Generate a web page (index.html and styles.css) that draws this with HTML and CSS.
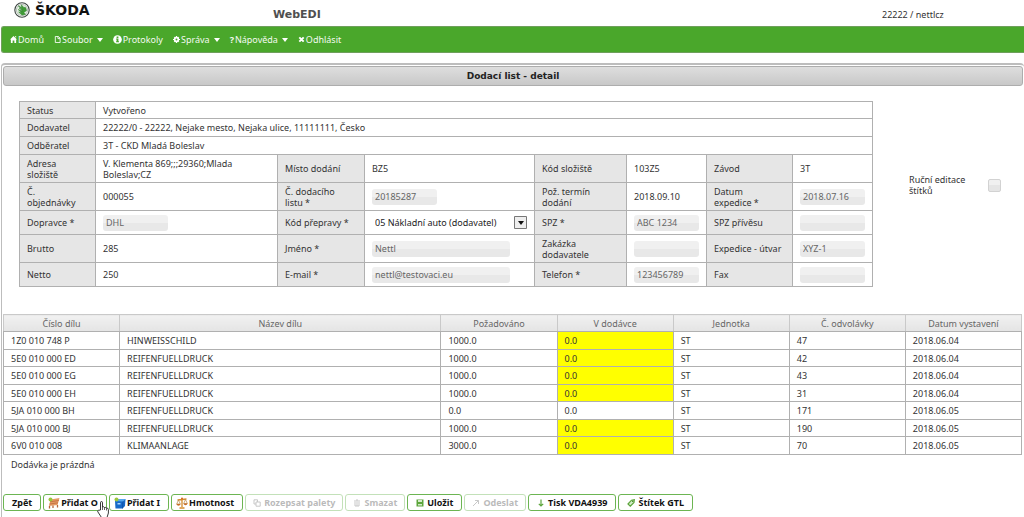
FILE: index.html
```html
<!DOCTYPE html>
<html lang="cs">
<head>
<meta charset="utf-8">
<title>WebEDI - Dodací list</title>
<link rel="stylesheet" href="styles.css">
</head>
<body>
<header class="top">
  <div class="brand">
    <svg class="brand-mark" viewBox="0 0 16 16" aria-hidden="true">
      <circle cx="8" cy="8" r="7.2" fill="#fff" stroke="#3b4440" stroke-width="1.1"/>
      <circle cx="8" cy="8" r="5.6" fill="#e3f1e0" stroke="#8d9a90" stroke-width=".6"/>
      <path d="M4.2 3.8 9 8.2 5 5.8 8.6 9 4.2 7.6 7.6 10.4 4.6 10 8 13 11.6 12.4 9.8 10.6 12.6 8.6 11.6 5.6 9.4 5.2 7.4 2.8 7.6 5.4z" fill="#3f9c35" stroke="#2c7b2e" stroke-width=".5"/>
    </svg>
    <span class="brand-name">ŠKODA</span>
  </div>
  <h1 class="app-name">WebEDI</h1>
  <span class="user">22222 / nettlcz</span>
</header>

<nav class="menu">
  <a class="menu-item" href="#"><svg class="ico" viewBox="0 0 8 8" aria-hidden="true"><path d="M4 0 8 4H7v4H5V5H3v3H1V4H0zM6 0h1v2L6 1z" fill="#fff"/></svg>Domů</a>
  <a class="menu-item" href="#"><svg class="ico" viewBox="0 0 8 8" aria-hidden="true"><path d="M1.5.5H5L7 2.5V7.5H1.5zM4.5.5V3H7" fill="none" stroke="#fff"/></svg>Soubor<span class="caret"></span></a>
  <a class="menu-item" href="#"><svg class="ico-info" viewBox="0 0 10 10" aria-hidden="true"><circle cx="5" cy="5" r="4.8" fill="#fff"/><path d="M4 1.7h2v1.5H4zM3.5 4H6v3h.7v1H3.4V7H4V5h-.5z" fill="#4aa72b"/></svg>Protokoly</a>
  <a class="menu-item" href="#"><svg class="ico" viewBox="0 0 8 8" aria-hidden="true"><path d="M3.3 0h1.4v1L6 .9l1.1 1.2L6.8 3.3H8v1.4H6.8L7.1 6 6 7.1l-1.3-.3V8H3.3V6.8L2 7.1.9 6l.3-1.3H0V3.3h1.2L.9 2 2 .9l1.3.3z" fill="#fff"/><circle cx="4" cy="4" r="1.1" fill="#4aa72b"/></svg>Správa<span class="caret"></span></a>
  <a class="menu-item" href="#"><b>?</b>Nápověda<span class="caret"></span></a>
  <a class="menu-item" href="#"><svg class="ico" viewBox="0 0 8 8" aria-hidden="true"><path d="M1.5 1.5l5 5M6.5 1.5l-5 5" stroke="#fff" stroke-width="2.2"/></svg>Odhlásit</a>
</nav>

<main class="panel">
  <h2 class="panel-title">Dodací list - detail</h2>

  <div class="detail">
    <table class="form">
      <colgroup><col class="f1"><col class="f2"><col class="f3"><col class="f4"><col class="f5"><col class="f6"><col class="f7"><col class="f8"></colgroup>
      <tr class="single"><th>Status</th><td colspan="7">Vytvořeno</td></tr>
      <tr class="single tall"><th>Dodavatel</th><td colspan="7">22222/0 - 22222, Nejake mesto, Nejaka ulice, 11111111, Česko</td></tr>
      <tr class="single tall"><th>Odběratel</th><td colspan="7">3T - CKD Mladá Boleslav</td></tr>
      <tr class="double">
        <th>Adresa<br>složiště</th><td>V. Klementa 869;;;29360;Mlada<br>Boleslav;CZ</td>
        <th>Místo dodání</th><td>BZ5</td>
        <th>Kód složiště</th><td>103Z5</td>
        <th>Závod</th><td>3T</td>
      </tr>
      <tr class="double">
        <th>Č.<br>objednávky</th><td>000055</td>
        <th><label for="note">Č. dodacího<br>listu *</label></th><td><input class="field" id="note" value="20185287" disabled></td>
        <th>Pož. termín<br>dodání</th><td>2018.09.10</td>
        <th><label for="date">Datum<br>expedice *</label></th><td><input class="field" id="date" value="2018.07.16" disabled></td>
      </tr>
      <tr class="control">
        <th><label for="carrier">Dopravce *</label></th><td><input class="field" id="carrier" value="DHL" disabled></td>
        <th><label for="mode">Kód přepravy *</label></th>
        <td><div class="picker"><select id="mode"><option>05 Nákladní auto (dodavatel)</option></select><svg viewBox="0 0 13 13" aria-hidden="true"><path d="M.5.5h12v12H.5z" fill="#eee" stroke="#777"/><path d="M4 5h6L7 9z" fill="#111"/></svg></div></td>
        <th><label for="spz">SPZ *</label></th><td><input class="field" id="spz" value="ABC 1234" disabled></td>
        <th><label for="trailer">SPZ přívěsu</label></th><td><input class="field" id="trailer" disabled></td>
      </tr>
      <tr class="double">
        <th>Brutto</th><td>285</td>
        <th><label for="name">Jméno *</label></th><td><input class="field wide" id="name" value="Nettl" disabled></td>
        <th><label for="order">Zakázka<br>dodavatele</label></th><td><input class="field" id="order" disabled></td>
        <th><label for="dept">Expedice - útvar</label></th><td><input class="field" id="dept" value="XYZ-1" disabled></td>
      </tr>
      <tr class="control">
        <th>Netto</th><td>250</td>
        <th><label for="mail">E-mail *</label></th><td><input class="field wide" id="mail" value="nettl@testovaci.eu" disabled></td>
        <th><label for="phone">Telefon *</label></th><td><input class="field" id="phone" value="123456789" disabled></td>
        <th><label for="fax">Fax</label></th><td><input class="field" id="fax" disabled></td>
      </tr>
    </table>
    <div class="manual">
      <label for="manual">Ruční editace<br>štítků</label>
      <input type="checkbox" id="manual" disabled>
    </div>
  </div>

  <table class="parts">
    <colgroup><col class="p1"><col class="p2"><col class="p1"><col class="p1"><col class="p1"><col class="p1"><col class="p1"></colgroup>
    <thead><tr><th>Číslo dílu</th><th>Název dílu</th><th>Požadováno</th><th>V dodávce</th><th>Jednotka</th><th>Č. odvolávky</th><th>Datum vystavení</th></tr></thead>
    <tbody>
      <tr><td>1Z0 010 748 P</td><td>HINWEISSCHILD</td><td>1000.0</td><td class="open">0.0</td><td>ST</td><td>47</td><td>2018.06.04</td></tr>
      <tr><td>5E0 010 000 ED</td><td>REIFENFUELLDRUCK</td><td>1000.0</td><td class="open">0.0</td><td>ST</td><td>42</td><td>2018.06.04</td></tr>
      <tr><td>5E0 010 000 EG</td><td>REIFENFUELLDRUCK</td><td>1000.0</td><td class="open">0.0</td><td>ST</td><td>43</td><td>2018.06.04</td></tr>
      <tr><td>5E0 010 000 EH</td><td>REIFENFUELLDRUCK</td><td>1000.0</td><td class="open">0.0</td><td>ST</td><td>31</td><td>2018.06.04</td></tr>
      <tr><td>5JA 010 000 BH</td><td>REIFENFUELLDRUCK</td><td>0.0</td><td>0.0</td><td>ST</td><td>171</td><td>2018.06.05</td></tr>
      <tr><td>5JA 010 000 BJ</td><td>REIFENFUELLDRUCK</td><td>1000.0</td><td class="open">0.0</td><td>ST</td><td>190</td><td>2018.06.05</td></tr>
      <tr><td>6V0 010 008</td><td>KLIMAANLAGE</td><td>3000.0</td><td class="open">0.0</td><td>ST</td><td>70</td><td>2018.06.05</td></tr>
    </tbody>
  </table>
  <p class="empty">Dodávka je prázdná</p>

  <div class="actions">
    <button class="btn">Zpět</button>
    <button class="btn"><svg class="pic" viewBox="0 0 12 12" aria-hidden="true"><path d="M2.500 2.500 11.500 1 9.500 8 1 9z" fill="#e59a63"/><path d="M2 4.800 11 3.500M1.500 7 10 5.800" stroke="#b8623a" stroke-width=".7"/><path d="M1.500 9v2.500M5 8.500v2.500M9.500 8v2.500" stroke="#b5653a" stroke-width="1.300"/><circle cx="2.500" cy="2.500" r="2" fill="#9bc53d"/></svg>Přidat O<svg class="cursor" viewBox="0 0 12 17" aria-hidden="true"><path d="M3.500 9V1.800q0-1.300 1-1.300t1 1.300V6q1.500-.8 2 .5 1.400-.6 1.900.6 2-.3 2 1.400v3.500L10 16.500H4.500L.8 10.800Q.3 9.500 1.500 9.300z" fill="#fff" stroke="#222" stroke-width=".9"/><path d="M5.500 6v3M7.500 6.500V9M9.500 7.200V9.500" stroke="#222" stroke-width=".7"/></svg></button>
    <button class="btn"><svg class="pic" viewBox="0 0 12 12" aria-hidden="true"><path d="M1 4 4 2h7.500L11 9 8.500 11.500H1.500z" fill="#1769c9"/><path d="M1 4 4 2h7.500L9 4.500z" fill="#55a7ee"/><path d="M9 4.500 8.500 11.500" stroke="#0b4593" stroke-width=".7"/><path d="M3.500 6h3v1.500h-3z" fill="#a8d6ff"/><circle cx="2.500" cy="2.500" r="2" fill="#9bc53d"/></svg>Přidat I</button>
    <button class="btn"><svg class="pic" viewBox="0 0 12 12" aria-hidden="true"><path d="M6 1v9M3.500 11h5M1.500 3 10.500 2" fill="none" stroke="#d38b2d" stroke-width="1.300"/><path d="M2.500 3 .7 7h3.600zM9.500 2.500 7.700 6.500h3.600z" fill="none" stroke="#b88746" stroke-width=".7"/><path d="M.3 7h4.400Q4 8.800 2.500 8.800T.3 7zM7.300 6.500h4.400Q11 8.300 9.500 8.300T7.300 6.500z" fill="#c86e28"/><circle cx="6" cy="1.500" r="1" fill="#d66b25"/></svg>Hmotnost</button>
    <button class="btn" disabled><svg class="ico" viewBox="0 0 8 8" aria-hidden="true"><path d="M1 3V.8h3.500V3M3 3h4.200v4.200H3zM1 3v2h2" fill="none" stroke="#777"/></svg>Rozepsat palety</button>
    <button class="btn" disabled><svg class="ico" viewBox="0 0 8 8" aria-hidden="true"><path d="M1 2h6M3 1h2M2 3v4h4V3M4 3v4" fill="none" stroke="#777"/></svg>Smazat</button>
    <button class="btn"><svg class="ico" viewBox="0 0 8 8" aria-hidden="true"><path d="M.5.5h7v7h-7z" fill="#5da53c"/><path d="M2 1h4v2H2zM2 5h4v1.500H2z" fill="#d4ebca"/></svg>Uložit</button>
    <button class="btn" disabled><svg class="ico" viewBox="0 0 8 8" aria-hidden="true"><path d="M1 7 6.500 1.500M3 1.500h3.500V5" fill="none" stroke="#777"/></svg>Odeslat</button>
    <button class="btn"><svg class="ico" viewBox="0 0 8 8" aria-hidden="true"><path d="M4 .5V7M1.800 4.800 4 7l2.200-2.200" fill="none" stroke="#5da53c" stroke-width="1.200"/></svg>Tisk VDA4939</button>
    <button class="btn"><svg class="ico" viewBox="0 0 8 8" aria-hidden="true"><path d="M1 5 4.500 1.200 7.300.7 7 3.500 3.300 7.200z" fill="#d4ebca" stroke="#5da53c" stroke-width="1.200"/><circle cx="5.700" cy="2.300" r=".8" fill="#3c8420"/></svg>Štítek GTL</button>
  </div>
</main>
</body>
</html>
```
FILE: styles.css
```css
* { box-sizing: border-box; }

body {
  margin: 0;
  background: #fff;
  color: #333;
  font: 9px/11px "Noto Sans", Verdana, sans-serif;
}

input, select, button { font: inherit; }

/* Header */
.top {
  display: grid;
  grid-template-columns: 273fr 609fr 142fr;
  height: 26px;
}
.brand { display: flex; align-items: flex-start; gap: 5px; padding: 2px 0 0 14px; }
.brand-mark { width: 16px; height: 16px; }
.brand-name { color: #111; font: bold 14px/16px "DejaVu Sans", Verdana, sans-serif; }
.app-name { margin: 0; padding-top: 8px; font: bold 11px/14px "DejaVu Sans", Verdana, sans-serif; color: #4f4f4f; }
.user { padding-top: 9px; }

/* Menu */
.menu {
  display: flex;
  align-items: center;
  gap: 10px;
  height: 27px;
  margin-left: 1px;
  padding-left: 8px;
  background: #4aa72b;
  border: 1px solid #6f9f5c;
  border-right: 0;
  border-radius: 3px 0 0 3px;
}
.menu-item { display: flex; align-items: center; gap: 1px; color: #f4faf1; text-decoration: none; }
.ico { width: 8px; height: 8px; flex: none; }
.menu .ico { width: 7px; height: 7px; }
.ico-info { width: 9px; height: 9px; flex: none; }
.caret { margin-left: 3px; border: 3px solid transparent; border-top: 4px solid #fff; border-bottom: 0; }

/* Panel */
.panel {
  margin: 10px 0 0 1px;
  padding: 1px 1px 8px 1px;
  border: 1px solid #bdbdbd;
  border-top-width: 2px;
  border-right: 0;
  border-bottom: 0;
  border-radius: 4px 4px 0 0;
}
.panel-title {
  margin: 0;
  font: bold 9px/18px "DejaVu Sans", Verdana, sans-serif;
  text-align: center;
  color: #222;
  background: linear-gradient(#dedede, #c8c8c8);
  border: 1px solid #adadad;
  border-radius: 3px;
}

/* Delivery note form */
.detail { display: flex; padding: 15px 22px 0 16px; }
table { border-collapse: collapse; table-layout: fixed; }
th { font-weight: normal; }
.form { flex: 1; width: 0; }
.form th, .form td { padding: 0 7px; border: 1px solid #b0b0b0; text-align: left; }
.form th { background: #e6e6e6; }
.f1 { width: 76px; }
.f2 { width: 182px; }
.f3 { width: 87px; }
.f4 { width: 170px; }
.f5 { width: 92px; }
.f6 { width: 80px; }
.f7 { width: 86px; }
.f8 { width: 80px; }
.single { height: 17px; }
.tall { height: 18px; }
.double { height: 28px; }
.control { height: 24px; }

.field {
  display: block;
  width: 65px;
  max-width: 100%;
  height: 16px;
  padding: 0 3px;
  border: 0;
  border-radius: 3px;
  background: linear-gradient(#f0f0f0 50%, #e8e8e8 50%);
  color: #666;
}
.wide { width: 138px; }

.picker { display: grid; grid-template-columns: 1fr 13px; align-items: center; }
.picker select {
  grid-area: 1 / 1 / 2 / 3;
  width: 100%;
  height: 16px;
  padding: 0 3px;
  appearance: none;
  border: 0;
  background: #fff;
  color: #222;
}
.picker svg { grid-area: 1 / 2; width: 13px; height: 13px; pointer-events: none; }

.manual { display: flex; align-items: center; justify-content: space-between; width: 129px; padding-left: 36px; padding-bottom: 18px; }
.manual input {
  appearance: none;
  width: 13px;
  height: 13px;
  margin: 0;
  border: 1px solid #d2d2d2;
  border-radius: 2px;
  background: linear-gradient(#f0f0f0 50%, #e5e5e5 50%);
}

/* Parts table */
.parts { width: calc(100% - 1px); margin-top: 27px; }
.parts th, .parts td { padding: 0 7px; border: 1px solid #b0b0b0; }
.parts thead tr { height: 17px; }
.parts th { border-color: #c9c9c9; border-bottom-color: #b0b0b0; background: linear-gradient(#f1f1f1, #e4e4e4); color: #666; }
.parts tbody tr { height: 18px; }
.parts tbody tr:nth-child(even) { height: 17px; }
.parts .open { background: #ff0; }
.p1 { width: 116px; }
.p2 { width: 321px; }

.empty { margin: 4px 8px 0; }

/* Actions */
.actions { display: flex; gap: 2px; margin-top: 24px; }
.btn {
  position: relative;
  display: flex;
  align-items: center;
  gap: 3px;
  height: 17px;
  padding: 0 8px;
  border: 1px solid #6cb552;
  border-radius: 3px;
  background: #fff;
  color: #111;
  font-weight: bold;
  white-space: nowrap;
}
.btn:has(.pic) { padding-left: 4px; gap: 1px; }
.btn:disabled { padding: 0 7px; opacity: .4; color: #555; }
.pic { width: 12px; height: 12px; flex: none; }
.cursor { position: absolute; left: 53px; top: 6px; width: 12px; height: 17px; z-index: 1; }
```
